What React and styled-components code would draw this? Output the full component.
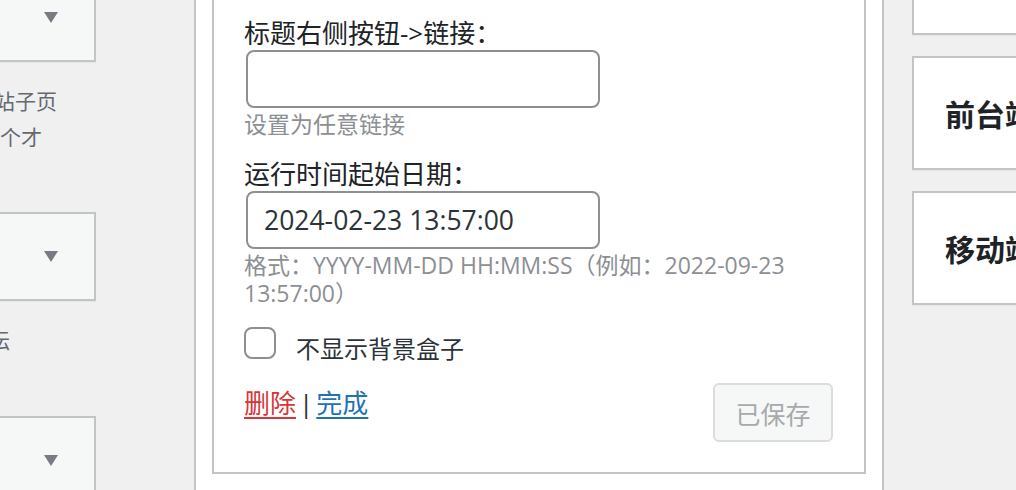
import React from 'react'
import styled, { createGlobalStyle } from 'styled-components'

const GlobalStyle = createGlobalStyle`
  html, body {
    margin: 0;
    padding: 0;
    background: #f0f0f1;
  }
  body {
    font-family: "Open Sans", "Noto Sans CJK SC", sans-serif;
    color: #2c3338;
  }
`

const Page = styled.div`
  display: grid;
  grid-template-columns: 194px 690px 1fr;
  width: 1016px;
  height: 490px;
  overflow: hidden;
  background: #f0f0f1;
`

/* left: available widgets list (cropped) */
const LeftColumn = styled.div`
  overflow: hidden;
`
const LeftInner = styled.div`
  width: 260px;
  margin-left: -164px;
  margin-top: -27px;
`
const Section = styled.div`
  margin-bottom: 57px;
`
const WidgetTop = styled.div`
  height: 85px;
  display: flex;
  align-items: center;
  justify-content: flex-end;
  padding-right: 36px;
  background: #f6f7f7;
  border: 2px solid #c3c4c7;
  box-shadow: 0 1px 1px rgba(0, 0, 0, 0.04);
`
const Arrow = styled.span`
  width: 0;
  height: 0;
  border-left: 7.5px solid transparent;
  border-right: 7.5px solid transparent;
  border-top: 11px solid #787c82;
`
const Desc = styled.div`
  margin-top: 22px;
  font-size: 21px;
  line-height: 35.5px;
  color: #646970;
`
const DescLine = styled.span`
  display: block;
  white-space: nowrap;
  margin-left: ${(p) => 164 + (p.shift || 0)}px;
`

/* middle: open sidebar with the widget form */
const MiddleColumn = styled.div`
  background: #fff;
  border-left: 2px solid #c3c4c7;
  border-right: 2px solid #c3c4c7;
  padding: 0 16px;
`
const Widget = styled.div`
  border: 2px solid #c3c4c7;
  border-top: 0;
  padding: 17px 31px 30px 30px;
  background: #fff;
`
const Field = styled.div`
  & + & {
    margin-top: 20px;
  }
`
const Label = styled.label`
  display: block;
  font-size: 26px;
  line-height: 33px;
  color: #1d2327;
`
const TextInput = styled.input`
  display: block;
  box-sizing: border-box;
  width: 354px;
  height: 58px;
  margin: 0 0 0 2px;
  padding: 0 16px;
  border: 2px solid #8c8f94;
  border-radius: 8px;
  background: #fff;
  font-family: "Open Sans", "Noto Sans CJK SC", sans-serif;
  font-size: 26.5px;
  color: #2c3338;
  outline: none;
`
const Help = styled.p`
  margin: 2px 0 0;
  font-size: 23px;
  line-height: 28px;
  color: #8c8f94;
`
const CheckRow = styled.div`
  display: flex;
  align-items: flex-start;
  margin-top: 20px;
`
const CheckBox = styled.span`
  box-sizing: border-box;
  width: 32px;
  height: 32px;
  border: 2px solid #8c8f94;
  border-radius: 8px;
  background: #fff;
  flex-shrink: 0;
`
const CheckLabel = styled.span`
  margin-left: 20px;
  padding-top: 6px;
  font-size: 24px;
  line-height: 32px;
  color: #2c3338;
`
const Footer = styled.div`
  display: flex;
  justify-content: space-between;
  align-items: flex-start;
  margin-top: 18px;
`
const Links = styled.div`
  font-size: 26px;
  line-height: 40px;
  color: #2c3338;
`
const TextLink = styled.a`
  color: ${(p) => (p.danger ? '#d63638' : '#2271b1')};
  text-decoration: underline;
  text-underline-offset: 4px;
  text-decoration-thickness: 2px;
`
const Sep = styled.span`
  margin: 0 3px;
`
const SaveButton = styled.button`
  box-sizing: border-box;
  width: 120px;
  height: 59px;
  padding: 0;
  border: 2px solid #dcdcde;
  border-radius: 6px;
  background: #f6f7f7;
  color: #a7aaad;
  font-family: "Open Sans", "Noto Sans CJK SC", sans-serif;
  font-size: 25px;
`

/* right: other sidebars, collapsed */
const RightColumn = styled.div`
  overflow: hidden;
  padding-left: 28px;
`
const SidebarList = styled.div`
  display: flex;
  flex-direction: column;
  gap: 21px;
  width: 300px;
  margin-top: -79px;
`
const SidebarBox = styled.div`
  box-sizing: border-box;
  height: 114px;
  display: flex;
  align-items: center;
  padding-left: 31px;
  background: #fff;
  border: 2px solid #c3c4c7;
  box-shadow: 0 1px 1px rgba(0, 0, 0, 0.04);
`
const SidebarTitle = styled.h2`
  margin: 0;
  font-size: 30px;
  font-weight: 700;
  color: #1d2327;
  white-space: nowrap;
`

const leftWidgets = [
  { lines: [{ text: '站子页', shift: -6 }, { text: '个才', shift: 0 }] },
  { lines: [{ text: '坛', shift: -11 }] },
  { lines: [] },
]

const sidebars = ['', '前台端侧边栏', '移动端侧边栏']

const App = () => {
  return (
    <>
      <GlobalStyle />
      <Page>
        <LeftColumn>
          <LeftInner>
            {leftWidgets.map((w, i) => (
              <Section key={i}>
                <WidgetTop>
                  <Arrow />
                </WidgetTop>
                {w.lines.length ? (
                  <Desc>
                    {w.lines.map((l) => (
                      <DescLine key={l.text} shift={l.shift}>
                        {l.text}
                      </DescLine>
                    ))}
                  </Desc>
                ) : null}
              </Section>
            ))}
          </LeftInner>
        </LeftColumn>

        <MiddleColumn>
          <Widget>
            <Field>
              <Label>标题右侧按钮-&gt;链接：</Label>
              <TextInput type="text" defaultValue="" />
              <Help>设置为任意链接</Help>
            </Field>
            <Field>
              <Label>运行时间起始日期：</Label>
              <TextInput type="text" defaultValue="2024-02-23 13:57:00" />
              <Help>格式：YYYY-MM-DD HH:MM:SS（例如：2022-09-23 13:57:00）</Help>
            </Field>
            <CheckRow>
              <CheckBox />
              <CheckLabel>不显示背景盒子</CheckLabel>
            </CheckRow>
            <Footer>
              <Links>
                <TextLink danger href="#">删除</TextLink>
                <Sep>|</Sep>
                <TextLink href="#">完成</TextLink>
              </Links>
              <SaveButton disabled>已保存</SaveButton>
            </Footer>
          </Widget>
        </MiddleColumn>

        <RightColumn>
          <SidebarList>
            {sidebars.map((s, i) => (
              <SidebarBox key={i}>
                <SidebarTitle>{s}</SidebarTitle>
              </SidebarBox>
            ))}
          </SidebarList>
        </RightColumn>
      </Page>
    </>
  )
}

export default App
